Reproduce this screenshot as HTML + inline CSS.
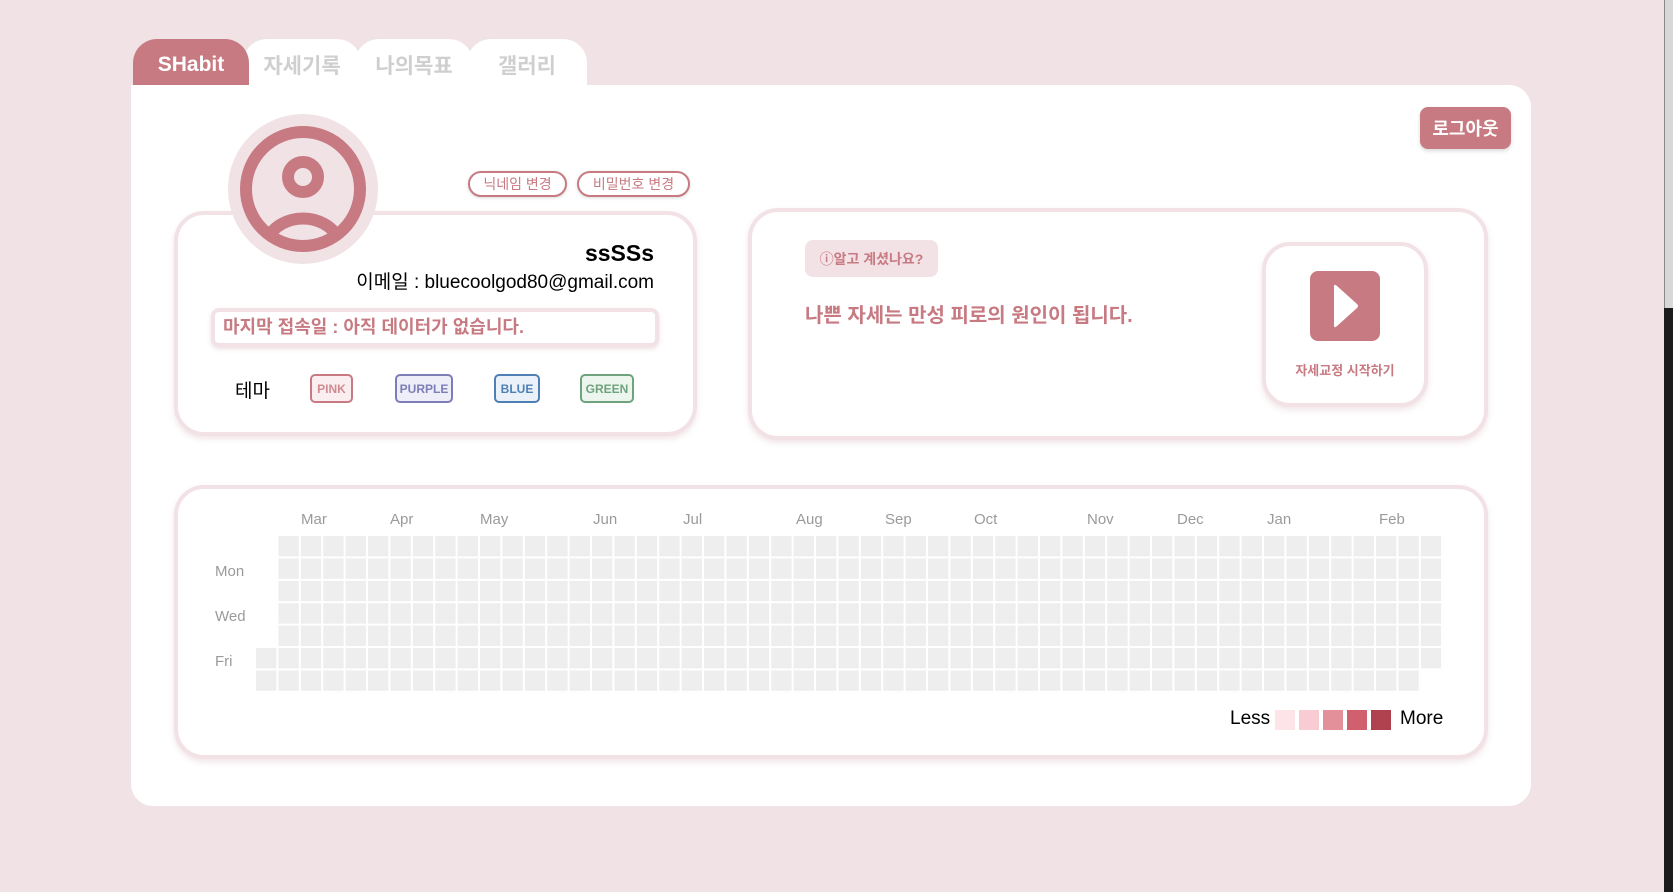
<!DOCTYPE html>
<html><head><meta charset="utf-8"><style>
*{margin:0;padding:0;box-sizing:border-box}
body{width:1673px;height:892px;background:#f0e2e5;position:relative;overflow:hidden;font-family:"Liberation Sans","Noto Sans CJK KR",sans-serif}
.abs{position:absolute}
.tab{position:absolute;top:39px;height:46px;border-radius:24px 24px 0 0;background:#fff;color:#cfcfcf;font-weight:bold;font-size:21px;display:flex;align-items:center;justify-content:center;padding-top:6px}
.card{position:absolute;background:#fff;border:4px solid #f2e2e6;border-radius:30px;box-shadow:0 3px 6px rgba(200,150,160,.25)}
.pill{position:absolute;height:26px;border:2px solid #c77a82;border-radius:14px;color:#c77a82;font-size:14px;display:flex;align-items:center;justify-content:center;background:#fff;box-shadow:0 1px 3px rgba(0,0,0,.15)}
.th{position:absolute;top:374px;height:29px;border-radius:5px;border:2px solid;font-size:12px;display:flex;align-items:center;justify-content:center;font-weight:bold}
.mo{position:absolute;top:511px;color:#9a9a9a;font-size:15px}
.dy{position:absolute;left:215px;color:#9a9a9a;font-size:15px}
.lg{position:absolute;top:710px;width:20px;height:20px}
</style></head><body>
<div class="tab" style="left:133px;width:116px;background:#c77a82;color:#fff;z-index:2">SHabit</div>
<div class="tab" style="left:243px;width:118px;z-index:1">자세기록</div>
<div class="tab" style="left:355px;width:118px">나의목표</div>
<div class="tab" style="left:467px;width:120px">갤러리</div>
<div class="abs" style="left:131px;top:85px;width:1400px;height:721px;background:#fff;border-radius:0 22px 22px 22px"></div>
<div class="abs" style="left:1420px;top:107px;width:91px;height:42px;background:#c77a82;border-radius:8px;color:#fff;font-weight:bold;font-size:18px;display:flex;align-items:center;justify-content:center;box-shadow:0 2px 4px rgba(0,0,0,.15)">로그아웃</div>

<div class="card" style="left:174px;top:211px;width:523px;height:225px"></div>
<svg class="abs" style="left:0;top:0" width="700" height="300">
<circle cx="303" cy="189" r="75" fill="#f1e2e6"/>
<circle cx="303" cy="189" r="57" fill="none" stroke="#c77a82" stroke-width="12"/>
<circle cx="303" cy="177" r="15" fill="none" stroke="#c77a82" stroke-width="12"/>
<path d="M268 238 A38 32 0 0 1 338 238" fill="none" stroke="#c77a82" stroke-width="12"/>
</svg>
<div class="pill" style="left:468px;top:171px;width:99px">닉네임 변경</div>
<div class="pill" style="left:577px;top:171px;width:113px">비밀번호 변경</div>
<div class="abs" style="left:400px;width:654px;left:0;top:240px;text-align:right;font-size:23px;font-weight:bold">ssSSs</div>
<div class="abs" style="left:300px;width:354px;top:267px;text-align:right;font-size:19px">이메일 : bluecoolgod80@gmail.com</div>
<div class="abs" style="left:211px;top:308px;width:448px;height:39px;border:4px solid #f2e2e6;border-radius:8px;color:#c77a82;font-weight:bold;font-size:18px;padding-left:8px;line-height:31px;box-shadow:0 2px 4px rgba(200,150,160,.3)">마지막 접속일 : 아직 데이터가 없습니다.</div>
<div class="abs" style="left:235px;top:376px;font-size:19px">테마</div>
<div class="th" style="left:310px;width:43px;border-color:#c77a82;color:#d08a92;background:#fbeef0">PINK</div>
<div class="th" style="left:395px;width:58px;border-color:#7d7db8;color:#7d7db8;background:#eeeef8">PURPLE</div>
<div class="th" style="left:494px;width:46px;border-color:#4f7fb5;color:#4f7fb5;background:#eaf1f8">BLUE</div>
<div class="th" style="left:580px;width:54px;border-color:#6fa37d;color:#6fa37d;background:#ecf5ee">GREEN</div>

<div class="card" style="left:748px;top:208px;width:740px;height:232px"></div>
<div class="abs" style="left:805px;top:240px;width:133px;height:37px;background:#f2e1e5;border-radius:8px;color:#c77a82;font-weight:bold;font-size:14px;display:flex;align-items:center;justify-content:center">ⓘ알고 계셨나요?</div>
<div class="abs" style="left:805px;top:299px;color:#c77a82;font-weight:bold;font-size:20px">나쁜 자세는 만성 피로의 원인이 됩니다.</div>
<div class="card" style="left:1262px;top:242px;width:166px;height:165px;border-radius:28px"></div>
<div class="abs" style="left:1310px;top:271px;width:70px;height:70px;background:#c77a82;border-radius:8px"></div>
<svg class="abs" style="left:1310px;top:271px" width="70" height="70"><path d="M24 16 L24 54 Q24 58 27 55 L47 37 Q49 35 47 33 L27 15 Q24 12 24 16Z" fill="#fff"/></svg>
<div class="abs" style="left:1262px;width:166px;top:360px;text-align:center;color:#c77a82;font-weight:bold;font-size:13px">자세교정 시작하기</div>

<div class="card" style="left:174px;top:485px;width:1314px;height:274px"></div>
<div class="mo" style="left:301px">Mar</div><div class="mo" style="left:390px">Apr</div><div class="mo" style="left:480px">May</div><div class="mo" style="left:593px">Jun</div><div class="mo" style="left:683px">Jul</div><div class="mo" style="left:796px">Aug</div><div class="mo" style="left:885px">Sep</div><div class="mo" style="left:974px">Oct</div><div class="mo" style="left:1087px">Nov</div><div class="mo" style="left:1177px">Dec</div><div class="mo" style="left:1267px">Jan</div><div class="mo" style="left:1379px">Feb</div>
<div class="dy" style="top:563px">Mon</div><div class="dy" style="top:608px">Wed</div><div class="dy" style="top:653px">Fri</div>
<svg class="abs" style="left:256px;top:536px" width="1190" height="160">
<defs><pattern id="c" x="0" y="0" width="22.4" height="22.4" patternUnits="userSpaceOnUse"><rect width="20.4" height="20.4" fill="#eeeeee"/></pattern></defs>
<rect x="22.4" y="0" width="1142.4" height="156.8" fill="url(#c)"/>
<rect x="0" y="112" width="22.4" height="44.8" fill="url(#c)"/>
<rect x="1164.8" y="0" width="22.4" height="134.4" fill="url(#c)"/>
</svg>
<div class="abs" style="left:1230px;top:708px;font-size:19px">Less</div>
<div class="lg" style="left:1275px;background:#fde4e8"></div>
<div class="lg" style="left:1299px;background:#f9ccd4"></div>
<div class="lg" style="left:1323px;background:#e4909b"></div>
<div class="lg" style="left:1347px;background:#d0606e"></div>
<div class="lg" style="left:1371px;background:#b0424f"></div>
<div class="abs" style="left:1400px;top:708px;font-size:19px">More</div>

<div class="abs" style="left:1664px;top:0;width:9px;height:308px;background:#d8d8d8;border-left:1px solid #888"></div>
<div class="abs" style="left:1664px;top:308px;width:9px;height:584px;background:#1c1c1c"></div>
</body></html>
